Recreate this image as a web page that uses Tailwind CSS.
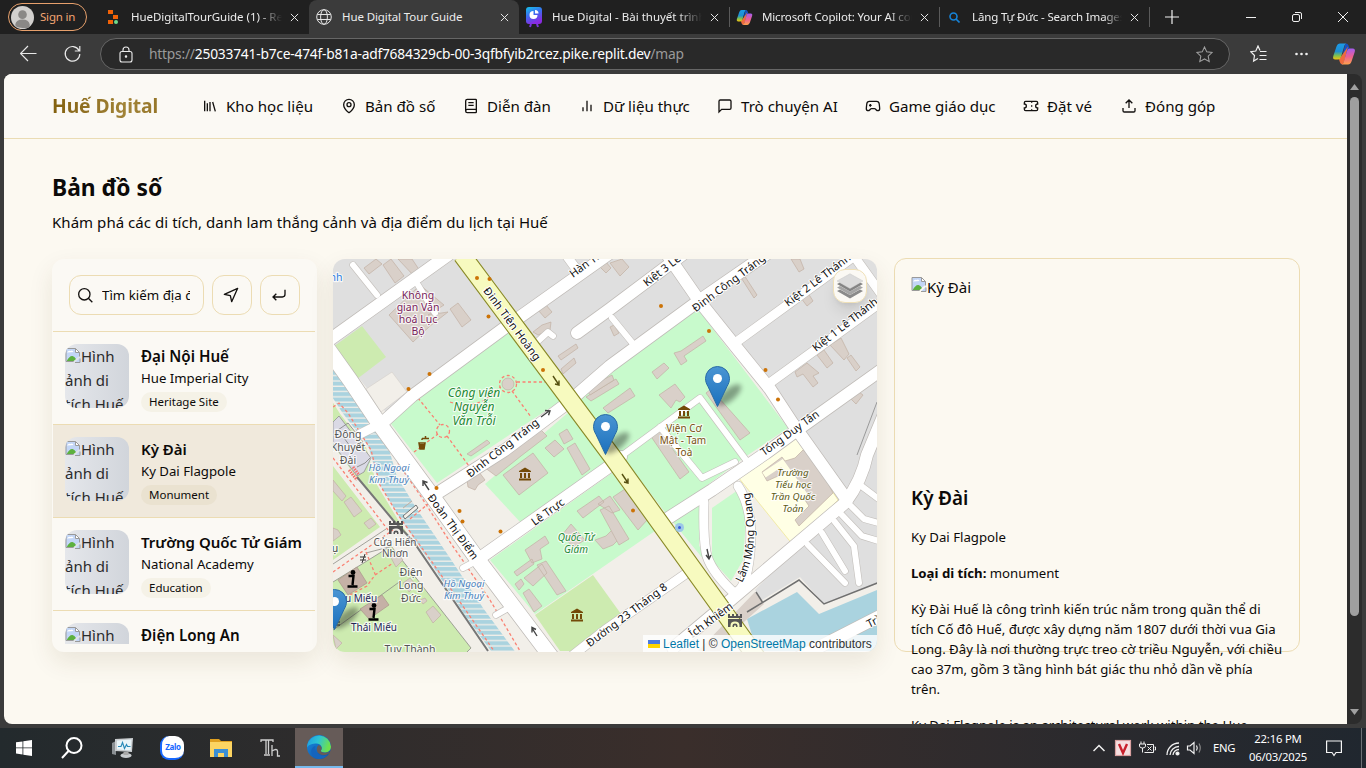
<!DOCTYPE html>
<html lang="vi">
<head>
<meta charset="utf-8">
<title>Hue Digital Tour Guide</title>
<script src="https://cdn.jsdelivr.net/npm/@tailwindcss/browser@4"></script>
</head>
<body class="w-[1366px] h-[768px] overflow-hidden bg-[#3b3b3b] font-['Noto_Sans','Open_Sans',sans-serif] text-[#0c0a09] flex flex-col">

<!-- shared symbols -->
<svg class="absolute size-0">
  <defs>
    <symbol id="broken" viewBox="0 0 16 16">
      <path d="M1 1.500h9.500l4 4V9l-3.500 2.500L8 14.500H1z" fill="#c3d6f6"/>
      <path d="M2 5.500q1.500-2.500 3.500-1.500 2-1.500 3 1z" fill="#fff"/>
      <path d="M1.500 14.500q3-6 6-5.500 2 .3 3.500 3L8 14.500z" fill="#5db13f"/>
      <path d="M10.500 1.500v4h4z" fill="#fff"/>
      <path d="M8.500 14.500H1v-13h9.500l4 4v4M10.500 1.500v4h4" fill="none" stroke="#9a9a9a"/>
      <path d="M10 15.500l5-5v5z" fill="#c3d6f6"/><path d="M10 15.500h5v-4" fill="none" stroke="#9a9a9a"/>
    </symbol>
    <symbol id="x" viewBox="0 0 10 10"><path d="M1 1l8 8M9 1L1 9" stroke="#e8e8e8" stroke-width="1.100" fill="none"/></symbol>
    <linearGradient id="cpa" x1="0" y1="0" x2="0" y2="1"><stop stop-color="#1c9be8"/><stop offset=".5" stop-color="#1f8fd0"/><stop offset=".75" stop-color="#7cc053"/><stop offset="1" stop-color="#f1c40f"/></linearGradient>
    <linearGradient id="cpb" x1="0" y1="0" x2="0" y2="1"><stop stop-color="#a45cf0"/><stop offset=".5" stop-color="#ec5f93"/><stop offset="1" stop-color="#ffa14a"/></linearGradient>
    <symbol id="copilot" viewBox="0 0 24 24">
      <path d="M17.500 6.500L16.500 3.500Q16 1.500 13.500 1.500L12 7l-3 13q-.5 2.500 1.500 2.500" fill="#1751c4"/>
      <path d="M7 17.500l1 3q.5 2 3 2l2-6 3-12" fill="#ee6b3c"/>
      <path d="M14.500 1.500H8Q5.500 1.500 4.500 4.500L1.300 14q-1 3.500 2 3.500h3q2 0 2.800-2.700L12 5q.8-3.500 2.500-3.500z" fill="url(#cpa)"/>
      <path d="M9.500 22.500H16q2.500 0 3.500-3L22.700 10q1-3.500-2-3.500h-3q-2 0-2.800 2.700L12 19q-.8 3.500-2.500 3.500z" fill="url(#cpb)"/>
    </symbol>
    <symbol id="museum" viewBox="0 0 14 14"><path fill="#734a08" d="M7 .5L13 4v1H1V4zM2 6h2v5H2zM6 6h2v5H6zM10 6h2v5h-2zM1 11.500h12V13.500H1z"/></symbol>
    <symbol id="gate" viewBox="0 0 14 14"><path fill="#555" d="M0 1h2v2h2V1h2v2h2V1h2v2h2V1h2v4H0zM0 6h14v8h-2.500v-1.500q0-4-4.500-4t-4.500 4V14H0z"/><path fill="#555" d="M4.500 14v-1.500q0-2 2.500-2t2.500 2V14H8v-1.500H6V14z"/></symbol>
    <linearGradient id="pinfill" x1="0" y1="0" x2="0" y2="1"><stop stop-color="#4a95d3"/><stop offset="1" stop-color="#1b70bd"/></linearGradient>
    <filter id="soft" x="-50%" y="-50%" width="200%" height="200%"><feGaussianBlur stdDeviation="2.800"/></filter>
    <symbol id="pin" viewBox="0 0 50 42" overflow="visible">
      <ellipse cx="24" cy="29" rx="15" ry="6" transform="rotate(-40 24 29)" fill="#000" opacity=".36" filter="url(#soft)"/>
      <path d="M12.500.5A12 12 0 0 0 .5 12.500c0 3 1 5.500 2.500 8L12.500 40.500 22 20.500c1.500-2.500 2.500-5 2.500-8A12 12 0 0 0 12.500.5z" fill="url(#pinfill)" stroke="#2a6ca5"/>
      <circle cx="12.500" cy="12.500" r="4.500" fill="#fff"/>
    </symbol>
  </defs>
</svg>

<!-- tab strip -->
<div class="h-[34px] shrink-0 bg-[#202020] flex items-center text-[11.5px] text-[#ececec]">
  <div class="w-[99px] pl-2 shrink-0">
    <div class="w-[79px] h-[28px] rounded-full border border-[#e7a06c] flex items-center gap-[6px] text-[#f3a673] tracking-[-0.2px] pl-0.5">
      <svg class="size-[23px] shrink-0" viewBox="0 0 24 24"><circle cx="12" cy="12" r="12" fill="#d2d0ce"/><circle cx="12" cy="9" r="4.500" fill="#8a8886"/><path d="M4.500 19q1-5 7.500-5t7.500 5-7.500 4-7.500-4" fill="#8a8886"/></svg>
      <span class="whitespace-nowrap">Sign in</span>
    </div>
  </div>
  <div class="w-[210px] h-full flex items-center shrink-0 pl-2">
    <svg class="w-[12px] h-[16px] mr-3 shrink-0" viewBox="0 0 12 16"><path d="M1 1h5v4H1zM6 6h5v4H6zM1 11h5v4H1z" fill="#f26207"/><circle cx="9" cy="13" r="2" fill="#6fdc8c"/></svg>
    <span class="w-[151px] overflow-hidden whitespace-nowrap tracking-[-0.05px] [mask-image:linear-gradient(to_right,black_84%,transparent)]">HueDigitalTourGuide (1) - Replit</span>
    <svg class="size-[9px] ml-2 shrink-0"><use href="#x"/></svg>
  </div>
  <div class="w-[210px] h-full flex items-center shrink-0 pl-[7px] bg-[#3b3b3b] rounded-t-lg">
    <svg class="size-4 mr-[10px] shrink-0" viewBox="0 0 16 16" fill="none" stroke="#e4e4e4"><circle cx="8" cy="8" r="7.300"/><ellipse cx="8" cy="8" rx="3.400" ry="7.300"/><path d="M1.300 5.500h13.400M1.300 10.500h13.400"/></svg>
    <span class="w-[150px] overflow-hidden whitespace-nowrap tracking-[-0.1px]">Hue Digital Tour Guide</span>
    <svg class="size-[9px] ml-2 shrink-0"><use href="#x"/></svg>
  </div>
  <div class="w-[210px] h-full flex items-center shrink-0 pl-[7px]">
    <svg class="w-4 h-[21px] mr-[10px] shrink-0" viewBox="0 0 16 21"><linearGradient id="pf" x1="0" y1="0" x2="0.400" y2="1"><stop stop-color="#16c3e8"/><stop offset=".5" stop-color="#3a6cf0"/><stop offset="1" stop-color="#8a2be2"/></linearGradient><rect width="16" height="17" rx="3" fill="url(#pf)"/><path d="M5 17l-1 3M11 17l1 3" stroke="#7a35e0" stroke-width="2"/><path d="M7.500 4a4 4 0 1 0 4 4h-4z" fill="#fff"/><path d="M9 3v3.500h3.500A3.500 3.500 0 0 0 9 3z" fill="#fff"/></svg>
    <span class="w-[150px] overflow-hidden whitespace-nowrap [mask-image:linear-gradient(to_right,black_84%,transparent)]">Hue Digital - Bài thuyết trình</span>
    <svg class="size-[9px] ml-2 shrink-0"><use href="#x"/></svg>
  </div>
  <div class="w-[210px] h-5 flex items-center shrink-0 pl-[6px] border-l border-[#5a5a5a]">
    <svg class="size-[17px] mr-[9px] shrink-0"><use href="#copilot"/></svg>
    <span class="w-[150px] overflow-hidden whitespace-nowrap tracking-[-0.15px] [mask-image:linear-gradient(to_right,black_84%,transparent)]">Microsoft Copilot: Your AI companion</span>
    <svg class="size-[9px] ml-2 shrink-0"><use href="#x"/></svg>
  </div>
  <div class="w-[210px] h-5 flex items-center shrink-0 pl-[9px] border-l border-[#5a5a5a]">
    <svg class="size-[11px] mr-[12px] shrink-0" viewBox="0 0 11 11" fill="none" stroke="#1683d8" stroke-width="1.600"><circle cx="4.500" cy="4.500" r="3.500"/><path d="M7 7l3.500 3.500"/></svg>
    <span class="w-[150px] overflow-hidden whitespace-nowrap tracking-[-0.15px] [mask-image:linear-gradient(to_right,black_88%,transparent)]">Lăng Tự Đức - Search Images</span>
    <svg class="size-[9px] ml-2 shrink-0"><use href="#x"/></svg>
  </div>
  <div class="h-5 border-l border-[#5a5a5a] pl-[15px] flex items-center">
    <svg class="w-[196px] h-[14px]" viewBox="0 0 196 14" fill="none" stroke="#f0f0f0"><path d="M7 0v14M0 7h14" stroke-width="1.200"/><path d="M81 7.500h10"/><rect x="127.500" y="4.500" width="7" height="7" rx="1.500"/><path d="M130 2.500h5q1.500 0 1.500 1.500v5"/><path d="M173 2l10 10M183 2l-10 10"/></svg>
  </div>
</div>

<!-- address bar -->
<div class="h-[40px] shrink-0 flex items-center">
  <svg class="w-[62px] h-5 ml-5" viewBox="0 0 62 20" fill="none" stroke="#e8e8e8" stroke-width="1.200"><path d="M0.500 9.500h16M8 2L.5 9.500 8 17"/><path d="M59 6.500A7.300 7.300 0 1 0 59.800 10M59.800 2v5h-5"/></svg>
  <div class="ml-[18px] w-[1130px] h-[32px] rounded-full border border-[#666] bg-[#292929] flex items-center pl-[18px] pr-[16px] text-[13.800px]">
    <svg class="w-[14px] h-[17px] mr-[16px]" viewBox="0 0 14 17" fill="none" stroke="#eee" stroke-width="1.100"><rect x="1" y="5.500" width="12" height="10.500" rx="2"/><path d="M4 5.500V4a3 3 0 0 1 6 0v1.500"/><circle cx="7" cy="10.500" r=".7" fill="#eee"/></svg>
    <span class="whitespace-nowrap text-[#9a9a9a] tracking-[-0.22px]">https://<span class="text-white">25033741-b7ce-474f-b81a-adf7684329cb-00-3qfbfyib2rcez.pike.replit.dev</span>/map</span>
    <svg class="size-[17px] ml-auto" viewBox="0 0 18 18" fill="none" stroke="#a0a0a0" stroke-width="1.100"><path d="M9 1l2.400 5.200 5.600.7-4.100 3.900 1.100 5.700L9 13.700l-5 2.800 1.100-5.700L1 6.900l5.600-.7z"/></svg>
  </div>
  <svg class="w-[60px] h-[18px] ml-[20px]" viewBox="0 0 60 18" fill="none" stroke="#f0f0f0" stroke-width="1.200"><path d="M10 5.500L8 1 5.800 6l-5 .7 3.700 3.800-.9 5.500L8 13.500M10 6.500h6.500M9.500 10.500h7M9.500 14.500h7"/><g fill="#f0f0f0" stroke="none"><circle cx="46.500" cy="9" r="1.300"/><circle cx="51.500" cy="9" r="1.300"/><circle cx="56.500" cy="9" r="1.300"/></g></svg>
  <svg class="size-6 ml-[22px] shrink-0"><use href="#copilot"/></svg>
</div>

<!-- viewport -->
<div class="h-[650px] shrink-0 flex pl-1 pr-1">
  <div class="w-[1343px] h-full bg-[#fcf9f1] rounded-l-lg overflow-hidden flex flex-col">
    <header class="h-[65px] shrink-0 bg-[#fbf9f4] border-b border-[#eadcb4] flex items-center pl-[48px]">
      <div class="w-[151px] shrink-0 text-[19.300px] font-bold tracking-[-0.1px] bg-gradient-to-r from-[#83610d] via-[#a28438] to-[#83610d] bg-clip-text text-transparent whitespace-nowrap"><span class="inline-block">Huế Digital</span></div>
      <nav class="flex items-center text-[15.100px] whitespace-nowrap [&>a]:flex [&>a]:items-center [&>a]:gap-2 [&_svg]:size-4 [&_svg]:shrink-0 [&_svg]:fill-none [&_svg]:stroke-[#141210] [&_svg]:stroke-2">
        <a class="w-[139px] -ml-px"><svg viewBox="0 0 24 24"><path d="m16 6 4 14M12 6v14M8 8v12M4 4v16"/></svg>Kho học liệu</a>
        <a class="w-[122px]"><svg viewBox="0 0 24 24"><path d="M20 10c0 5-5.500 10.200-7.400 11.800a1 1 0 0 1-1.200 0C9.500 20.200 4 15 4 10a8 8 0 0 1 16 0"/><circle cx="12" cy="10" r="3"/></svg>Bản đồ số</a>
        <a class="w-[116px]"><svg viewBox="0 0 24 24"><path d="M4 19.500v-15A2.500 2.500 0 0 1 6.500 2H19a1 1 0 0 1 1 1v18a1 1 0 0 1-1 1H6.500a1 1 0 0 1 0-5H20M8 7h8M8 11h8"/></svg>Diễn đàn</a>
        <a class="w-[138px]"><svg viewBox="0 0 24 24"><path d="M18 20V10M12 20V4M6 20v-6"/></svg>Dữ liệu thực</a>
        <a class="w-[148px]"><svg viewBox="0 0 24 24"><path d="M21 15a2 2 0 0 1-2 2H7l-4 4V5a2 2 0 0 1 2-2h14a2 2 0 0 1 2 2z"/></svg>Trò chuyện AI</a>
        <a class="w-[158px]"><svg viewBox="0 0 24 24"><path d="M6 11h4M8 9v4M15 12h.01M18 10h.01M17.300 5H6.700a4 4 0 0 0-4 3.600C2.600 9.400 2 14.500 2 16a3 3 0 0 0 3 3c1 0 1.500-.5 2-1l1.400-1.400a2 2 0 0 1 1.400-.6h4.400a2 2 0 0 1 1.400.6L17 18c.5.5 1 1 2 1a3 3 0 0 0 3-3c0-1.500-.6-6.600-.7-7.400a4 4 0 0 0-4-3.600z"/></svg>Game giáo dục</a>
        <a class="w-[98px]"><svg viewBox="0 0 24 24"><path d="M2 9a3 3 0 0 1 0 6v2a2 2 0 0 0 2 2h16a2 2 0 0 0 2-2v-2a3 3 0 0 1 0-6V7a2 2 0 0 0-2-2H4a2 2 0 0 0-2 2ZM13 5v2M13 17v2M13 11v2"/></svg>Đặt vé</a>
        <a><svg viewBox="0 0 24 24"><path d="M21 15v4a2 2 0 0 1-2 2H5a2 2 0 0 1-2-2v-4M17 8l-5-5-5 5M12 3v12"/></svg>Đóng góp</a>
      </nav>
    </header>

    <main class="pl-[48px] pt-[33px]">
      <h1 class="h-8 leading-8 text-[22.800px] font-bold whitespace-nowrap">Bản đồ số</h1>
      <p class="h-6 leading-6 mt-[6px] text-[15px] tracking-[0.045px] whitespace-nowrap">Khám phá các di tích, danh lam thắng cảnh và địa điểm du lịch tại Huế</p>

      <div class="flex mt-[25px]">
        <!-- place list -->
        <section class="w-[265px] h-[393px] bg-[#fbf9f4] rounded-xl shadow-[0_10px_24px_rgba(80,60,20,0.10)] overflow-hidden pl-px pr-[2px] pt-px">
          <div class="h-[72px] border-b border-[#ecdcb3] pt-[15px] pl-4 flex gap-2">
            <div class="w-[135px] h-10 rounded-xl border border-[#ecdcb3] flex items-center pl-[7px] pr-3">
              <svg class="size-4 shrink-0 mr-[9px]" viewBox="0 0 24 24" fill="none" stroke="#141210" stroke-width="2"><circle cx="11" cy="11" r="8.500"/><path d="m23 23-6-6"/></svg>
              <span class="text-[13.300px] w-[88px] overflow-hidden whitespace-nowrap pt-0.5">Tìm kiếm địa điểm...</span>
            </div>
            <div class="size-10 rounded-xl border border-[#ecdcb3] flex items-center justify-center"><svg class="size-4 -ml-0.5" viewBox="0 0 24 24" fill="none" stroke="#141210" stroke-width="2" stroke-linejoin="round"><path d="M2 11 22 2l-9 20-2-9z"/></svg></div>
            <div class="size-10 rounded-xl border border-[#ecdcb3] flex items-center justify-center"><svg class="size-4 -ml-0.5" viewBox="0 0 24 24" fill="none" stroke="#141210" stroke-width="2"><path d="m8 10-5 5 5 5M21 4v7a4 4 0 0 1-4 4H3"/></svg></div>
          </div>
          <div class="h-[312px] overflow-hidden whitespace-nowrap">
            <div class="h-[93px] border-b border-[#ecdcb3] p-3 flex gap-3">
              <div class="size-16 shrink-0 rounded-xl overflow-hidden bg-gradient-to-r from-[#e5e7eb] to-[#d1d5db] text-[15px] leading-6 text-[#2b2b2b]"><svg class="size-4 inline-block align-[-1px]"><use href="#broken"/></svg>Hình<br>ảnh di<br>tích Huế</div>
              <div><div class="text-[15.200px] leading-6 font-semibold">Đại Nội Huế</div><div class="text-[13.200px] leading-5">Hue Imperial City</div><div class="mt-[4px] inline-block px-2 h-5 leading-5 rounded-full bg-[#f5f2e7] text-[11.500px]">Heritage Site</div></div>
            </div>
            <div class="h-[93px] border-b border-[#ecdcb3] bg-[#f0e9dc] p-3 flex gap-3">
              <div class="size-16 shrink-0 rounded-xl overflow-hidden bg-gradient-to-r from-[#e5e7eb] to-[#d1d5db] text-[15px] leading-6 text-[#2b2b2b]"><svg class="size-4 inline-block align-[-1px]"><use href="#broken"/></svg>Hình<br>ảnh di<br>tích Huế</div>
              <div><div class="text-[15px] leading-6 font-semibold">Kỳ Đài</div><div class="text-[13.200px] leading-5">Ky Dai Flagpole</div><div class="mt-[4px] inline-block px-2 h-5 leading-5 rounded-full bg-[#eae2d0] text-[11.500px]">Monument</div></div>
            </div>
            <div class="h-[93px] border-b border-[#ecdcb3] p-3 flex gap-3">
              <div class="size-16 shrink-0 rounded-xl overflow-hidden bg-gradient-to-r from-[#e5e7eb] to-[#d1d5db] text-[15px] leading-6 text-[#2b2b2b]"><svg class="size-4 inline-block align-[-1px]"><use href="#broken"/></svg>Hình<br>ảnh di<br>tích Huế</div>
              <div><div class="text-[15px] leading-6 font-semibold">Trường Quốc Tử Giám</div><div class="text-[13.200px] leading-5">National Academy</div><div class="mt-[4px] inline-block px-2 h-5 leading-5 rounded-full bg-[#f5f2e7] text-[11.500px]">Education</div></div>
            </div>
            <div class="h-[93px] p-3 flex gap-3">
              <div class="size-16 shrink-0 rounded-xl overflow-hidden bg-gradient-to-r from-[#e5e7eb] to-[#d1d5db] text-[15px] leading-6 text-[#2b2b2b]"><svg class="size-4 inline-block align-[-1px]"><use href="#broken"/></svg>Hình<br>ảnh di<br>tích Huế</div>
              <div><div class="text-[15.200px] leading-6 font-semibold">Điện Long An</div></div>
            </div>
          </div>
        </section>

        <!-- map -->
        <section class="relative ml-4 w-[544px] h-[393px] rounded-xl overflow-hidden shadow-[0_10px_24px_rgba(80,60,20,0.10)]">
          <svg class="w-full h-full block" viewBox="333 259 544 393" font-family="Noto Sans, sans-serif">
            <defs>
              <pattern id="wet" width="20" height="5.300" patternUnits="userSpaceOnUse"><rect width="20" height="5.300" fill="#f2efe9"/><rect width="20" height="4" fill="#aad3df"/></pattern>
              <g id="roads" fill="none" stroke-linecap="round" stroke-linejoin="round">
                <path d="M325 343L448 255"/>
                <path d="M380 425L412 396 503 329 610 253"/>
                <path d="M436 494L505 450 565 405 610 366 700 300 768 253"/>
                <path d="M577 333L610 309 682 255"/>
                <path d="M664 250L700 302 736 347 770 389 793 424 815 455 847 500"/>
                <path d="M477 560L610 466 621 457M662 522L712 490 766 453 800 428 884 368"/>
                <path d="M673 648L733 598 845 503Q862 480 867 455L892 395"/>
                <path d="M790 662L884 614"/>
              </g>
              <g id="lanes" fill="none" stroke-linecap="round" stroke-linejoin="round">
                <path d="M735 343L860 252M767 385L884 300M851 252L884 298M704 502Q703 535 706 552T733 592M738 486Q754 510 750 552T733 592M572 656L605 630 687 573M566 255L577 270M360 434L380 424"/>
              </g>
              <g id="alleys" fill="none" stroke-linecap="round" stroke-linejoin="round">
                <path d="M612 318L634 345M620 457L700 398 746 460M660 427L702 478 735 462M463 568L478 560M496 615L510 607M537 342L548 332 553 336M418 285L435 313M353 265L377 295"/>
                <path d="M808 545L845 583M822 533L845 571M835 522L854 546 859 583M841 514L862 536 882 542M848 503L864 519 882 524M860 485L884 503"/>
              </g>
            </defs>
            <rect x="333" y="259" width="544" height="393" fill="#f2efe9"/>
            <path d="M333 259H877V583L824 604 800 577 762 600 755 590 840 503 790 430 700 300 570 400 510 325 388 415 333 345z" fill="#dfdfdf"/>
            <path d="M366 389L392 372 407 392 381 412z" fill="#f2efe9" stroke="#d4cfca" stroke-width=".6"/>
            <path d="M333 347L362 326 386 357 357 379z" fill="#cdebb0"/>
            <g fill="#c8facc">
              <path d="M388 420L507 330 562 400 437 483z"/>
              <path d="M485 484L570 411 607 463 521 523z"/>
              <path d="M570 403L697 308 788 428 745 457 667 515 610 440z"/>
              <path d="M490 560L612 473 655 531 600 569 535 614z"/>
              <path d="M673 522L702 503 699 545 708 565z"/>
              <path d="M712 508L738 490 746 520 743 560 731 581 712 560z"/>
            </g>
            <path d="M535 615L593 575 621 614 572 651H560z" fill="#cdebb0"/>
            <path d="M738 477L797 438 838 500 793 545z" fill="#ffffe5" stroke="#efe58c" stroke-width=".7"/>
            <!-- citadel and moat -->
            <path d="M333 396L366 440 378 485 410 525 450 582 500 651H488L413 541 357 478 333 445z" fill="#cdebb0"/>
            <path d="M333 466L380 527 333 560zM333 582L391 546 471 648 467 652H333z" fill="#cdebb0"/>
            <path d="M333 564L386 529M333 582L391 546 471 648 467 652M333 630L402 580M366 553L389 547" fill="none" stroke="#8d8d86" stroke-width=".8"/>
            <path d="M326 370L350 407 377 442 388 480 408 513 442 563 475 613 508 658" fill="none" stroke="#f2efe9" stroke-width="24"/>
            <path d="M326 370L350 407 377 442 388 480 408 513 442 563 475 613 508 658" fill="none" stroke="url(#wet)" stroke-width="19"/>
            <path d="M357 477L393 520 413 541 488 651" fill="none" stroke="#777" stroke-width="2"/>
            <path d="M333 422l6-6 32 42-7 14-7 4-24-32z" fill="#dad9e5" stroke="#888" stroke-width=".7"/>
            <path d="M338 430l10-7 15 19-10 8zM357 467l8-4 5-5" fill="none" stroke="#888" stroke-width=".9"/>
            <g fill="none" stroke="#fa8072" stroke-width="1.300" stroke-dasharray="3 2.500">
              <path d="M333 407L339 403 348 413 371 450 380 485 398 515 432 562 467 612 494 651M398 463L420 495 452 545 490 600 520 651M333 458L388 530M333 572L393 530M340 600L367 586 375 575 393 563M366 552L375 574M410 519L428 504"/>
              <path d="M418 398L440 425M447 436L469 466M414 452L438 434M517 382L546 382M512 391L531 417M450 402Q478 412 500 387"/>
              <circle cx="508" cy="384" r="8.500"/><circle cx="443" cy="431" r="6.500"/>
            </g>
            <path d="M349 470l8 10M353 467l6 8" stroke="#f4726a" stroke-width="3" stroke-dasharray="1.500 1"/>
            <!-- water -->
            <path d="M747 619L797 592 819 614 877 590V651H757z" fill="#aad3df"/>
            <path d="M698 651L755 592 764 604 735 630 720 651z" fill="#d9d0c9"/>
            <path d="M747 612L799 580 824 604 880 582M756 592L763 603" fill="none" stroke="#707070" stroke-width="1.500"/>
            <path d="M877 402L857 455" stroke="#888" stroke-width=".8"/>
            <!-- buildings -->
            <g fill="#d9d0c9" stroke="#c2b0a4" stroke-width=".7">
              <path d="M364 268L376 259 382 264 369 274zM383 265L391 259 404 276 395 283zM398 259h14l8 12-6 5zM389 315L420 285 432 295 444 305 428 315 448 312 430 326 413 342zM450 309L458 303 471 320 462 327zM538 310l8-5 6 7-7 6zM533 332l9-7 9-3-1 8-12 5zM558 356l18-12 2 4-17 12zM561 369l13-11 2 5-13 11zM586 397l30-18 3 5-28 17z"/>
              <path d="M600 267l6-5 5 6-5 5zM610 263l12-4 7 8-9 9zM740 276l4-1 13 20-3 3zM791 259h9l4 10-5 3zM801 298l7-5 5 8-6 5zM610 327l4-2 5 8-5 3zM795 372l12-9 12 10-6 3 5 7-5 4-10-13-6 3zM817 355l7-5 9 13-6 5zM830 345l11-7 8 16-5 6zM847 358l4-3 9 12-4 4zM849 397l6-8 8 6-7 9z"/>
              <path d="M674 353l7-2 22-15 3 5-22 15 3 5-6 4zM652 372l12-9 5 5-12 11zM659 395l16-11 10 13-5 5-4-2-5 8zM706 393l5-4 39 44-10 7zM603 408l27-20 5 8-27 17zM586 389l26-14 2 5-24 15zM650 435l9-5 30 42-9 7zM595 540l11-4 7-7 6 10-6 6-10 4z"/>
              <path d="M467 454l20-14 3 3-19 13zM467 480l12-8 6 8-7 5-3 5-7-3zM484 467l55-39 8 8-26 20-25 20zM503 475l30-22 15 20-29 22zM545 448l10-8 9 9-10 8zM559 434l8-5 6 10-9 5zM567 448l8-5 15 26-8 6z"/>
              <path d="M577 511l22-15 5 6-21 16zM598 504l12-8 10 14-8 3zM525 550l20-14 4 7-9 6 2 10-10 4zM514 572l18-13 2 5-17 12zM524 578l18-14 5 9-14 13zM537 565l9-4 20 30-9 4zM515 584l6-5 3 5-5 6zM523 593l6-4 13 17-8 6zM562 535l9-11 14 16-12 7zM613 497l12-8 23 30-10 11zM600 510l9-4 20 33-10 6z"/>
              <path d="M762 472l20-15 3 4 10-3 8-8 15 13 15 30-34 33-4-6 14-14-15-22-7-12-20 9z"/>
              <path d="M333 480l13 16-4 5-9-10zM344 502l7-5 11 14-8 6zM364 523l7-5 5 6-7 5zM333 528l5 2 3 5-8 6zM390 556l7-4 6 8-7 7zM403 508l9-7zM426 612l7-6 8 9-8 8zM333 635l9 8-6 6zM403 583l7-5 6 7-7 7zM420 600l5-2 2 3-4 3z"/>
              <circle cx="508" cy="384" r="6"/>
            </g>
            <path d="M338 580l19-13 10 16-19 12zM360 609l22-14 7 10-20 14z" fill="#c5b1a6" stroke="#ab968a" stroke-width=".7"/>
            <path d="M403 516l13-11 2 3-13 11z" fill="#f2efe9" stroke="#555" stroke-width=".8"/>
            <path d="M764 475l18-12 24 34" fill="none" stroke="#ffffe5" stroke-width="6"/>
            <!-- roads: casing then fill -->
            <use href="#alleys" stroke="#c4c0bc" stroke-width="7.200"/><use href="#lanes" stroke="#c4c0bc" stroke-width="10.200"/><use href="#roads" stroke="#c0bcb8" stroke-width="13.400"/>
            <path d="M325 345L350 380 380 425 430 493 478 560 552 658" fill="none" stroke="#bdb9b5" stroke-width="16.600"/>
            <use href="#alleys" stroke="#fff" stroke-width="6"/><use href="#lanes" stroke="#fff" stroke-width="9"/><use href="#roads" stroke="#fff" stroke-width="12"/>
            <path d="M325 345L350 380 380 425 430 493 478 560 552 658" fill="none" stroke="#fff" stroke-width="15.200"/>
            <path d="M462 255L611 455 757 658" fill="none" stroke="#8a8a28" stroke-width="19"/>
            <path d="M462 255L611 455 757 658" fill="none" stroke="#f7fabf" stroke-width="16.800"/>
            <!-- direction arrows -->
            <g stroke-width="1.400" fill="none"><path d="M553 376l6 9M559 380.500v4.500l-4-1" stroke="#555010"/><path d="M622 474l6 9M628 478.500v4.500l-4-1" stroke="#555010"/><path d="M541 417l8-6M545 410.500l5 .3-1.500 4.500M429 490l-6-9M423 486v-5l4.500 1.500M537 636l-5-8M532 632.500v-5l4 2M707 549l2 9M706 555l3 4 2-4" stroke="#444"/></g>
            <g fill="#cc7307"><circle cx="477" cy="278" r="2"/><circle cx="489.500" cy="279" r="2"/><circle cx="488.500" cy="316.500" r="2"/><circle cx="543" cy="370" r="2"/><circle cx="429.500" cy="374" r="2"/><circle cx="408.500" cy="389" r="2"/><circle cx="661" cy="306" r="2"/><circle cx="709" cy="331" r="2"/><circle cx="765.500" cy="370" r="2"/><circle cx="778" cy="399.500" r="2"/><circle cx="436.500" cy="488" r="2"/><circle cx="459.500" cy="511" r="2"/><circle cx="462.500" cy="521.500" r="2"/><circle cx="500.500" cy="531.500" r="2"/><circle cx="633" cy="510.500" r="2"/></g>
            <circle cx="679.500" cy="527.500" r="4.500" fill="#9cc7e8"/><circle cx="679.500" cy="527.500" r="1.500" fill="#3b5bdb"/>
            <use href="#museum" x="677" y="405" width="14" height="14"/><use href="#museum" x="518" y="467" width="14" height="14"/><use href="#museum" x="570" y="608" width="14" height="14"/>
            <use href="#gate" x="389" y="520" width="14" height="14"/><use href="#gate" x="728" y="613" width="14" height="14"/>
            <path d="M419 443h6l-1 6h-4zM422 438.500h7M425.500 436v2.500M422 438.500v1.500" fill="none" stroke="#734a08" stroke-width="1.500"/><path d="M419 444h6l-1 5h-4z" fill="#734a08"/>
            <g fill="none" stroke="#000" stroke-width="3"><path d="M348.500 576h5l-1 9M347.500 586.500h10M369.500 609h5l-1 9M368.500 619.500h10" stroke-width="2.400"/></g><circle cx="353" cy="572.500" r="2.400"/><circle cx="374" cy="605.500" r="2.400"/>
            <path d="M360 557h6M360 560h6M365 554l-3 9M333 622h7M333 625h7" stroke="#333" fill="none"/>
            <!-- labels -->
            <g paint-order="stroke" stroke="#fff" stroke-width="2.400" stroke-linejoin="round" stroke-opacity=".75" font-size="10.500" text-anchor="middle">
              <g fill="#7a1f5c"><text x="418" y="299">Không</text><text x="418" y="311">gian Văn</text><text x="418" y="323">hoá Lục</text><text x="418" y="335">Bộ</text></g>
              <text x="336" y="281" fill="#3080e0">nh</text>
              <g fill="#1f8a35" font-style="italic" font-size="12"><text x="474" y="397">Công viên</text><text x="474" y="411">Nguyễn</text><text x="474" y="425">Văn Trỗi</text></g>
              <g fill="#1f8a35" font-style="italic" font-size="10"><text x="576" y="541">Quốc Tử</text><text x="576" y="553">Giám</text></g>
              <g fill="#7a5212" font-size="10"><text x="684" y="432">Viện Cơ</text><text x="683" y="444">Mật - Tam</text><text x="684" y="456">Toà</text></g>
              <g fill="#5c5a14" font-style="italic" font-size="9.800"><text x="793" y="476">Trường</text><text x="793" y="488">Tiểu học</text><text x="793" y="500">Trần Quốc</text><text x="793" y="512">Toản</text></g>
              <g fill="#4a82bd" font-style="italic" font-size="9.800"><text x="389" y="471">Hồ Ngoại</text><text x="389" y="483">Kim Thuỷ</text><text x="464" y="587">Hồ Ngoại</text><text x="464" y="599">Kim Thuỷ</text></g>
              <g fill="#555"><text x="348" y="438">Đông</text><text x="348" y="451">Khuyết</text><text x="348" y="464">Đài</text><text x="395" y="546" font-size="10">Cửa Hiển</text><text x="395" y="557" font-size="10">Nhơn</text><text x="411" y="576">Điện</text><text x="411" y="589">Long</text><text x="411" y="602">Đức</text><text x="410" y="653">Tuy Thành</text></g>
              <text x="335" y="552" fill="#444">ụ</text>
              <g fill="#25255a" font-size="10"><text x="361" y="602">u Miếu</text><text x="374" y="631">Thái Miếu</text></g>
            </g>
            <g paint-order="stroke" stroke="#fff" stroke-width="2" stroke-linejoin="round" font-size="11" fill="#111" text-anchor="middle">
              <text transform="translate(509 326) rotate(53.500)" textLength="88">Đinh Tiên Hoàng</text>
              <text transform="translate(450 529) rotate(54)" textLength="78">Đoàn Thị Điểm</text>
              <text transform="translate(505 451) rotate(-38)" textLength="88">Đinh Công Tráng</text>
              <text transform="translate(731 286) rotate(-37)" textLength="88">Đinh Công Tráng</text>
              <text transform="translate(550 515) rotate(-36)">Lê Trực</text>
              <text transform="translate(573 278) rotate(-36)" text-anchor="start">Hàn Thuyên</text>
              <text transform="translate(647 287) rotate(-38)" text-anchor="start">Kiệt 3 Lê Thánh</text>
              <text transform="translate(788 307) rotate(-37)" text-anchor="start">Kiệt 2 Lê Thánh</text>
              <text transform="translate(816 352) rotate(-38)" text-anchor="start">Kiệt 1 Lê Thánh</text>
              <text transform="translate(792 436) rotate(-36)" textLength="69">Tống Duy Tân</text>
              <text transform="translate(629 618) rotate(-37)" textLength="98">Đường 23 Tháng 8</text>
              <text transform="translate(713 623) rotate(-36)">Ích Khiêm</text>
              <text transform="translate(869 628) rotate(-26)" text-anchor="start">Trầ</text>
              <path id="lmq" d="M742 583Q754 560 754 535T748 485" fill="none" stroke="none"/>
              <text text-anchor="start"><textPath href="#lmq" textLength="93">Lâm Mộng Quang</textPath></text>
            </g>
            <use href="#pin" x="705" y="366" width="50" height="42"/>
            <use href="#pin" x="593" y="414" width="50" height="42"/>
            <use href="#pin" x="322" y="589" width="50" height="42"/>
          </svg>
          <div class="absolute right-[10px] top-[10px] size-[34px] rounded-xl border border-[#efe0b8] bg-[#fbf9f4] shadow-lg flex items-center justify-center">
            <svg class="size-[26px]" viewBox="0 0 26 26"><path d="M0 18l13 7.500L26 18l-3-1.500L13 22 3 16.500z" fill="#8a8a8a"/><path d="M0 14.500L13 22l13-7.500-3-1.500-10 5.500L3 13z" fill="#a5a5a5"/><path d="M0 11l13 7.500L26 11l-3-1.500-10 5.500L3 9.500z" fill="#848484"/><path d="M0 8L13 .8 26 8l-13 7.500z" fill="#dcdcdc" stroke="#c9c9c9" stroke-width=".5"/></svg>
          </div>
          <div class="absolute right-0 bottom-0 h-[17px] w-[234px] bg-white/80 flex items-center pl-[5px] whitespace-nowrap font-['Liberation_Sans',sans-serif] text-[12px] text-[#333]">
            <svg class="w-3 h-2 mr-[3px] shrink-0" viewBox="0 0 12 8"><path d="M0 0h12v4H0z" fill="#4c7be1"/><path d="M0 4h12v4H0z" fill="#ffd500"/></svg>
            <span class="text-[#0078a8]">Leaflet</span>&nbsp;| ©&nbsp;<span class="text-[#0078a8]">OpenStreetMap</span>&nbsp;contributors
          </div>
        </section>

        <!-- detail card -->
        <section class="ml-[17px] -mt-px w-[406px] h-[394px] rounded-xl border border-[#ecdcb3] pl-4 pt-4">
          <div class="h-[208px] text-[15px] leading-6 flex"><svg class="size-4 mt-px"><use href="#broken"/></svg>Kỳ Đài</div>
          <h2 class="h-7 leading-7 mt-px text-[18.800px] font-semibold">Kỳ Đài</h2>
          <div class="text-[13.200px] leading-5 whitespace-nowrap flex flex-col gap-4 mt-[15px]">
            <p>Ky Dai Flagpole</p>
            <p><b>Loại di tích:</b> monument</p>
            <p>Kỳ Đài Huế là công trình kiến trúc nằm trong quần thể di<br>tích Cố đô Huế, được xây dựng năm 1807 dưới thời vua Gia<br>Long. Đây là nơi thường trực treo cờ triều Nguyễn, với chiều<br>cao 37m, gồm 3 tầng hình bát giác thu nhỏ dần về phía<br>trên.</p>
            <p>Ky Dai Flagpole is an architectural work within the Hue</p>
          </div>
        </section>
      </div>
    </main>
  </div>
  <!-- scrollbar -->
  <div class="w-[15px] h-full bg-[#2c2c2c] rounded-r-lg flex flex-col items-center pt-[10px]">
    <svg class="w-[9px] h-[6px]" viewBox="0 0 9 6"><path d="M0 6L4.500 0 9 6z" fill="#a0a0a0"/></svg>
    <div class="mt-[7px] w-[9px] h-[519px] rounded-full bg-[#9f9f9f]"></div>
    <svg class="w-[9px] h-[6px] mt-[93px]" viewBox="0 0 9 6"><path d="M0 0h9L4.500 6z" fill="#a0a0a0"/></svg>
  </div>
</div>
<div class="h-1 shrink-0 bg-[#3b3b3b]"></div>

<!-- taskbar -->
<div class="h-10 shrink-0 bg-gradient-to-r from-[#232a2d] via-[#3a2e2b] to-[#20272f] flex items-center text-white">
  <svg class="w-4 h-4 ml-4" viewBox="0 0 16 16" fill="#fff"><path d="M0 2.300l6.500-.9v6.100H0zM7.300 1.300L16 0v7.500H7.300zM0 8.300h6.500v6.200L0 13.600zM7.300 8.300H16V16l-8.700-1.200z"/></svg>
  <svg class="w-[22px] h-[22px] ml-[29px]" viewBox="0 0 22 22" fill="none" stroke="#fff" stroke-width="2"><circle cx="13" cy="8.500" r="7.500"/><path d="M7.500 14L1 21"/></svg>
  <svg class="w-6 h-[22px] ml-[28px]" viewBox="0 0 24 22"><path d="M1 6l4-2v14l-4-1z" fill="#8b9094"/><path d="M4 2l18-1-1 14-17-1z" fill="#c9cdd0"/><path d="M6 3.500l14.500-1-.8 11L6 12.500z" fill="#e9f4f8"/><path d="M7 9.500h3l1.500-4 2 6 2-4 1 2h3" stroke="#2a8ab8" fill="none" stroke-width="1.200"/><ellipse cx="15" cy="18.500" rx="5.500" ry="2.500" fill="#c9cdd0"/><path d="M12.500 15h5v3h-5z" fill="#aaa"/></svg>
  <div class="w-6 h-6 ml-[25px] rounded-[9px] bg-white border-l-2 border-b-2 border-[#1668ff] flex items-center justify-center text-[8px] font-bold tracking-[-0.3px] text-[#1668ff]">Zalo</div>
  <svg class="w-[22px] h-[18px] ml-[26px]" viewBox="0 0 22 18"><path d="M0 0h9l2 2h11v4H0z" fill="#e0a020"/><path d="M0 3h22v15H0z" fill="#fcd462"/><path d="M4 10h14v8h-4v-4H8v4H4z" fill="#3c8fd4"/></svg>
  <svg class="w-[20px] h-[20px] ml-[28px]" viewBox="0 0 20 20" fill="none" stroke="#d0d0d0" stroke-width="1.300"><path d="M1 4V2h12v2M6 2v14M8.500 2v14M4 17h6M12 7v11M12 13q5-3 5.500 0V18H20"/></svg>
  <div class="w-12 h-10 ml-[15px] bg-[#665b58] border-b-2 border-[#76b9ed] flex items-center justify-center">
    <svg class="size-6" viewBox="0 0 24 24"><linearGradient id="ea" x1="0" y1="0" x2="1" y2=".3"><stop stop-color="#1f9ae0"/><stop offset=".5" stop-color="#2cc3d6"/><stop offset="1" stop-color="#6de04e"/></linearGradient><linearGradient id="eb" x1="0" y1="0" x2=".8" y2="1"><stop stop-color="#1b8be0"/><stop offset="1" stop-color="#0c54a8"/></linearGradient><circle cx="12" cy="12" r="12" fill="url(#eb)"/><path d="M.2 10.500A12 12 0 0 1 24 11.500c0 4-3 6-6.500 6-3 0-4-1.200-3.500-2 2-3 0-7-4.500-7-4 0-8 1-9.300 4z" fill="url(#ea)"/><path d="M14 15.500q-.5 2 3.500 2.200 3 .1 5.200-1.200l-1 2q-3 2.500-7 1.500-5-1.500-5-6 0-2.500 2-4 2.300.8 2.800 2.500.4 1.600-.5 3z" fill="#665b58"/><path d="M8.500 11q-1.500 6 3.500 8.500 4 2 8.500.8A12 12 0 0 1 9 23.600Q3 20 4.500 14.500 6 11 8.500 11z" fill="#1464bd"/></svg>
  </div>
  <svg class="w-[110px] h-5 ml-[750px]" viewBox="0 0 110 20" fill="none" stroke="#f0f0f0" stroke-width="1.200">
    <path d="M.5 13L6 7.500 11.500 13" stroke-width="1.500"/>
    <rect x="22.500" y="2.500" width="15" height="15" fill="#f6dfe0" stroke="#d9a0a0"/><path d="M26 6l4 9 4-9" stroke="#c8202c" stroke-width="2.400"/>
    <path d="M48 3.500v2.500M51 3.500v2.500M46.500 6h6v2q0 2-3 2t-3-2zM49.500 10v4.500M54 6.500h6.500v8h-9M61.500 9h1v3h-1M54.500 8.500l4 4M58.500 8.500l-4 4" stroke-width="1"/>
    <path d="M74 17A12 12 0 0 1 86 5M77 17a9 9 0 0 1 9-8.500M80 17a6 6 0 0 1 6-5.500" stroke-width="1.300"/><circle cx="84.500" cy="15.500" r="1.500" fill="#fff"/>
    <path d="M94.500 8h2.500l4-3.500v11L97 12h-2.500zM103.500 7.500q1.500 2.500 0 5"/><path d="M106 5.500q2.500 4.500 0 9" stroke="#888"/>
  </svg>
  <span class="ml-[10px] w-[24px] text-[11.300px] tracking-[-0.3px] whitespace-nowrap">ENG</span>
  <div class="ml-[7px] w-[68px] text-[11.300px] leading-[18px] text-center tracking-[-0.2px] whitespace-nowrap">22:16 PM<br>06/03/2025</div>
  <svg class="w-4 h-[17px] ml-[14px]" viewBox="0 0 16 17" fill="none" stroke="#f5f5f5" stroke-width="1.200"><path d="M.6 1h14.800v11.500H10L8 15.500l-2-3H.6z"/></svg>
  <div class="ml-auto mr-1 h-10 w-px bg-[#6b7075]"></div>
</div>
</body>
</html>
